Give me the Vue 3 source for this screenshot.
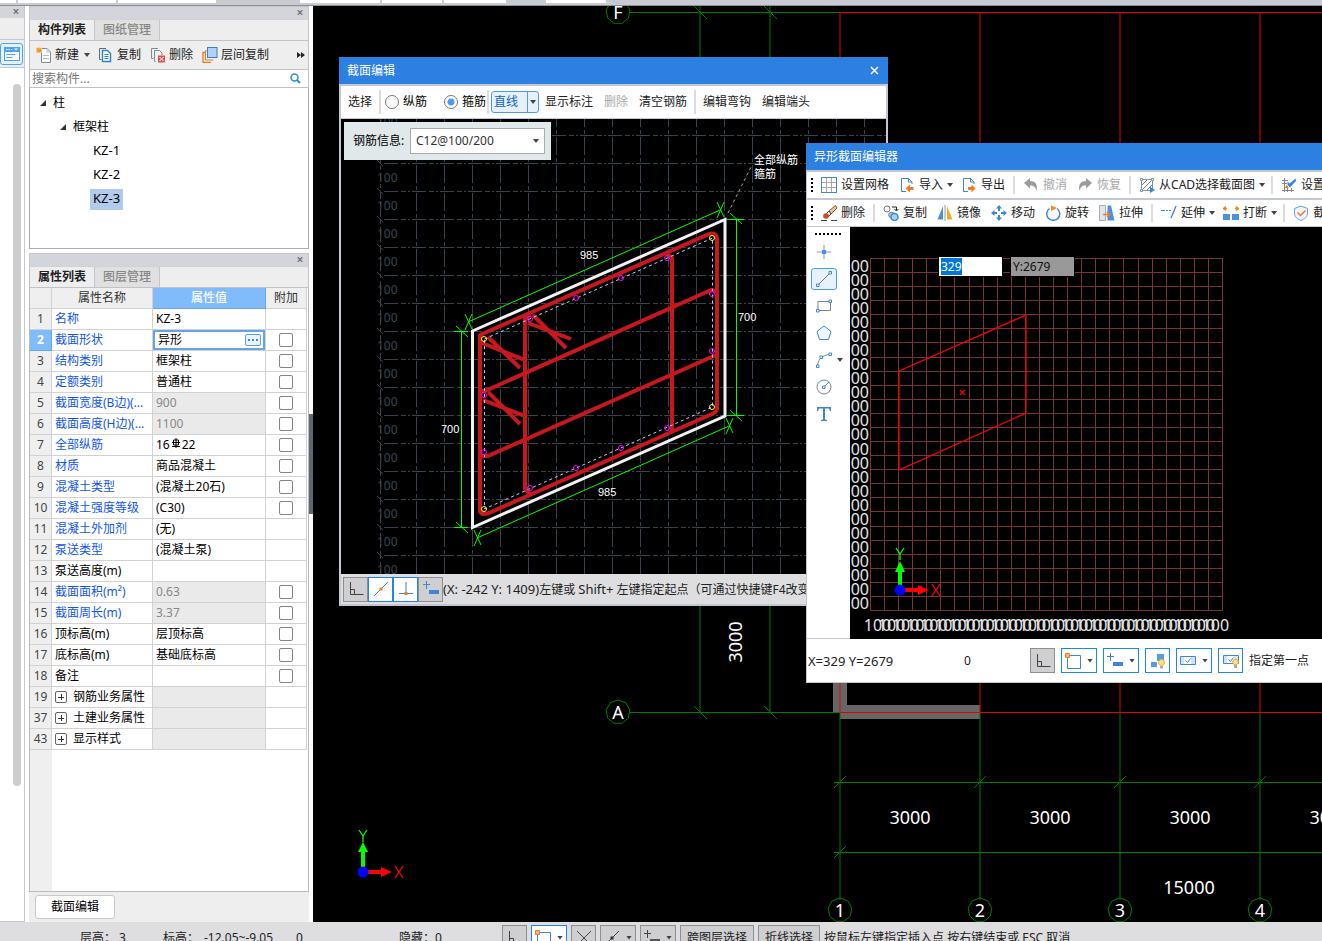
<script setup>
import { ref, onMounted } from "vue";

const xInput = ref(null);
const xValue = ref("329");
const search = ref("");
const shape = ref("异形");
const barType = ref("stirrup");
const rebarInfo = ref("C12@100/200");

onMounted(() => {
  xInput.value.focus();
  xInput.value.select();
});

const tabStrip = ["w16", "w99", "w99", "hole", "w80", "w59", "w62", "hole2", "w59"];

const properties = [
  { no: 1, name: "名称", value: "KZ-3", link: true },
  { no: 2, name: "截面形状", value: "异形", link: true, check: true, active: true },
  { no: 3, name: "结构类别", value: "框架柱", link: true, check: true },
  { no: 4, name: "定额类别", value: "普通柱", link: true, check: true },
  { no: 5, name: "截面宽度(B边)(...", value: "900", link: true, check: true, locked: true },
  { no: 6, name: "截面高度(H边)(...", value: "1100", link: true, check: true, locked: true },
  { no: 7, name: "全部纵筋", value: "16", rebar: "22", link: true, check: true },
  { no: 8, name: "材质", value: "商品混凝土", link: true, check: true },
  { no: 9, name: "混凝土类型", value: "(混凝土20石)", link: true, check: true },
  { no: 10, name: "混凝土强度等级", value: "(C30)", link: true, check: true },
  { no: 11, name: "混凝土外加剂", value: "(无)", link: true },
  { no: 12, name: "泵送类型", value: "(混凝土泵)", link: true },
  { no: 13, name: "泵送高度(m)", value: "" },
  { no: 14, name: "截面面积(m²)", value: "0.63", link: true, check: true, locked: true },
  { no: 15, name: "截面周长(m)", value: "3.37", link: true, check: true, locked: true },
  { no: 16, name: "顶标高(m)", value: "层顶标高", check: true },
  { no: 17, name: "底标高(m)", value: "基础底标高", check: true },
  { no: 18, name: "备注", value: "", check: true },
  { no: 19, name: "钢筋业务属性", value: "", group: true, locked: true },
  { no: 37, name: "土建业务属性", value: "", group: true, locked: true },
  { no: 43, name: "显示样式", value: "", group: true, locked: true },
];

const icons = {
  create:
    '<path d="M5.500 5.500V15.500H14.500V5L11 1.500H6" fill="#fff" stroke="#7b8c92"/><path d="M11 1.500V5H14.500M7 8.500h6M7 11.500h6" fill="none" stroke="#b9b9c4"/><path d="M0.500 1l5 4.500M5.500 1l-5 4.500M3 .5v5.500M.5 3.300h5.500" stroke="#f29a1f" stroke-width="1.200"/>',
  copy:
    '<path d="M3.500 12.500H1.500V1.500H8" fill="none" stroke="#5a6f80"/><path d="M4.500 3.500h5l3 3v8h-8z" fill="#fff" stroke="#2f7fd0" stroke-width="1.400"/><path d="M6.500 7.500h4M6.500 9.500h4M6.500 11.500h4" stroke="#2f7fd0"/>',
  remove:
    '<path d="M3.500 11.500H1.500V1.500H8M5.500 14.500h-1v-11h5l2.500 2.500v2" fill="none" stroke="#7b8c92"/><rect x="8" y="8.500" width="7" height="7" fill="#d9534f"/><path d="M9.500 10l4 4M13.500 10l-4 4" stroke="#fff"/>',
  layers:
    '<path d="M3 5.500H1V15.500H9" fill="none" stroke="#f07b1c" stroke-width="1.300"/><path d="M4.500 3.500H3.500V13H11.500" fill="none" stroke="#f07b1c"/><rect x="5.500" y=".5" width="9.500" height="10" fill="#b3d1ff" stroke="#3f7cc4"/>',
  grid:
    '<rect x=".5" y=".5" width="15" height="15" fill="#fff" stroke="#3f86d8"/><path d="M1 5.500h14M1 10.500h14M5.500 1v14M10.500 1v14" stroke="#a5a9ae"/><rect x=".5" y=".5" width="15" height="15" fill="none" stroke="#3f86d8"/>',
  load:
    '<path d="M7 14.500H2.500V1.500H9.500L13 5V7" fill="#fff" stroke="#3f86d8"/><path d="M9.500 1.500V5H13" fill="none" stroke="#3f86d8"/><path d="M6.500 11.500L11 7.500V10H14.500V13H11V15.500z" fill="#f37b21"/>',
  save:
    '<path d="M7 14.500H2.500V1.500H9.500L13 5V7" fill="#fff" stroke="#3f86d8"/><path d="M9.500 1.500V5H13" fill="none" stroke="#3f86d8"/><path d="M14.500 11.500L10.500 7.500V10H7V13H10.500V15.500z" fill="#f37b21"/>',
  undo: '<path d="M1 6L7 1V4C12 4 15 7 13.500 14C12.500 10 11 8.500 7 8.500V11.500z" fill="#9b9b9b"/>',
  redo: '<path d="M15 6L9 1V4C4 4 1 7 2.500 14C3.500 10 5 8.500 9 8.500V11.500z" fill="#9b9b9b"/>',
  hatch:
    '<rect x="2.500" y="2.500" width="11" height="11" fill="none" stroke="#84949a"/><path d="M3 8l5-5M3 13l10-10M8 13l5-5" stroke="#6b8088"/><path d="M1.500 1.500h2v2h-2zM12.500 1.500h2v2h-2zM1.500 12.500h2v2h-2z" fill="#fff" stroke="#84949a"/><path d="M11 9.500l5 3.500-5 3z" fill="#3f86d8"/>',
  setting:
    '<path d="M1 3.500h6M1 6.500h5M1 13.500h12M3.500 1v14M6.500 9v6M10.500 11v4" stroke="#85898e"/><path d="M14.500 1.500L8.500 6.500L6.500 4.500V8L9 10.500L15 4z" fill="#3f86d8"/><path d="M3.500 11.500l2-3.500 2.500 2.500z" fill="#f37b21"/>',
  brush:
    '<path d="M14.500 .5L8 6L10 9L16 3z" fill="#e8c79c" stroke="#7a5a38"/><path d="M8 6L5.500 8.500L7.500 11.500L10 9z" fill="#fff" stroke="#444"/><circle cx="5" cy="11" r="2.800" fill="#d24a18"/><path d="M0 15.500h6M10 15.500h6" stroke="#444"/>',
  copyShape:
    '<circle cx="4" cy="4" r="3" fill="#fff" stroke="#777"/><path d="M9 2h4.500v3.500M11.500 4l2 2 2-2" fill="none" stroke="#222"/><circle cx="8.500" cy="10" r="2.800" fill="#a9d0f8" stroke="#777"/><circle cx="11.500" cy="12" r="3.500" fill="#a9d0f8" stroke="#3f86d8" stroke-width="1.500"/>',
  mirror: '<path d="M6 1V14.500H.5z" fill="#4a8edb"/><path d="M10 1V14.500H15.500z" fill="#f5a81c"/><path d="M8 0v16" stroke="#999"/>',
  move:
    '<path d="M8 0l3 3.500H9V6H7V3.500H5zM8 16l3-3.500H9V10H7v2.500H5zM0 8l3.500-3V7H6v2H3.500v2zM16 8l-3.500-3V7H10v2h2.500v2z" fill="#3f86d8"/>',
  rotate:
    '<path d="M4.500 3.500A6.500 6.500 0 1 0 12 3.500" fill="none" stroke="#3f86d8" stroke-width="1.500"/><path d="M6 .5L12 3L6 6z" fill="#f28a1e"/>',
  stretch:
    '<path d="M.5 .5h6v15h-6z" fill="#e2e5ea" stroke="#a8acb4"/><path d="M8.500 .5h3.500L15.500 15.500h-7z" fill="#4a90e2"/><path d="M4 9.500h6M8 7l3 2.500L8 12" fill="none" stroke="#f37b21" stroke-width="1.500"/>',
  extend:
    '<path d="M0 5.500h4" stroke="#3f86d8"/><path d="M5 5.500h6" stroke="#3f86d8" stroke-dasharray="2 1"/><path d="M15 1L10 13" stroke="#3f86d8" stroke-width="1.300"/>',
  breakUp:
    '<path d="M0 9h7v6H0zM9 9h7v6H9z" fill="#4a90e2"/><path d="M0 3.500h4M12 3.500h4M3 1.500L.5 3.500 3 5.500M13 1.500l2.500 2-2.500 2" fill="none" stroke="#e08a14" stroke-width="1.300"/>',
  shield:
    '<path d="M8 1L14.500 3.500V8C14.500 12 11.500 14 8 15.500C4.500 14 1.500 12 1.500 8V3.500z" fill="#eef5fd" stroke="#6b9edb"/><path d="M4.500 7.500l3 3 5-5" fill="none" stroke="#f37b21" stroke-width="1.500"/>',
  point: '<path d="M8 1v4M8 11v4M1 8h4M11 8h4" stroke="#8b9298"/><circle cx="8" cy="8" r="2.500" fill="#4a90e2"/>',
  line: '<path d="M2 14L14 2" stroke="#6b757c"/><path d="M.5 13h2.500v2.500h-2.500zM13 .5h2.500v2.500h-2.500z" fill="#fff" stroke="#3f86d8"/>',
  rect: '<path d="M2 3.500h12.500v9H2z" fill="none" stroke="#7d868c"/><path d="M.5 11.500h2.500v2.500h-2.500zM13 2h2.500v2.500h-2.500z" fill="#fff" stroke="#3f86d8"/>',
  polygon: '<path d="M8 1L15 6.500L12.500 14.500H3.500L1 6.500z" fill="#f3f8fe" stroke="#3f86d8"/>',
  arc: '<path d="M1.500 14C2 7 6 3 14 2.500" fill="none" stroke="#7d868c"/><path d="M.5 13h2.500v2.500h-2.500zM4 4h2.500v2.500h-2.500zM13 1h2.500v2.500h-2.500z" fill="#fff" stroke="#3f86d8"/>',
  circle: '<circle cx="8" cy="8" r="7" fill="none" stroke="#7d868c"/><path d="M8 8l5-5" stroke="#3f86d8"/><path d="M6.500 7h2.500v2.500h-2.500z" fill="#fff" stroke="#3f86d8"/>',
  text: '<path d="M1 5V1h14v4h-1l-1-2.500H9V13.500l2 .5v1H5v-1l2-.5V2.500H3L2 5z" fill="#3f86d8"/>',
  corner: '<path d="M2.500 1V13.500H15.500M2.500 8.500H6.500V13.500" fill="none" stroke="#444"/>',
  midpoint: '<path d="M1 15L15 1" stroke="#3f86d8"/><path d="M6.500 6.500h3v3h-3z" fill="#f37b21"/>',
  foot: '<path d="M8 1V12M1 12.500H15" stroke="#3f86d8"/><path d="M6.500 11h3v3h-3z" fill="#f37b21"/>',
  offset: '<path d="M3.500 0v8M0 3.500h7" stroke="#3f86d8"/><path d="M6 9h10v4H6z" fill="#3f86d8"/>',
  offsetGray: '<path d="M3.500 0v8M0 3.500h7" stroke="#444"/><path d="M6 9h10v4H6z" fill="#555"/>',
  box: '<path d="M2.500 2.500h13v13h-13z" fill="#fff" stroke="#3f86d8"/><path d="M.5 .5h4v4h-4z" fill="#fbb27e" stroke="#f37b21"/>',
  cross: '<path d="M1 1L15 15M15 1L1 15" stroke="#444"/>',
  slash: '<path d="M1 15L15 1" stroke="#444"/><path d="M6.500 6.500h3v3h-3z" fill="#333"/>',
  bulb: '<path d="M7 1h7v7H7zM1 9h6v5H1z" fill="#5a9be6"/><circle cx="11.500" cy="9.500" r="3" fill="#ffe08a" stroke="#e5b030"/><path d="M10 13h3v2.500h-3z" fill="#aaa"/>',
  screen: '<path d="M.5 3.500h15v8H.5z" fill="#cfe3fa" stroke="#3f86d8"/><path d="M4 4h7v7H4z" fill="#fff"/><path d="M5.500 7.500l2 2 3-4" fill="none" stroke="#3f86d8"/>',
  screenBulb:
    '<path d="M.5 2.500h15v8H.5z" fill="#cfe3fa" stroke="#3f86d8"/><path d="M4 3h7v7H4z" fill="#fff"/><path d="M5.500 6.500l2 2 3-4" fill="none" stroke="#3f86d8"/><circle cx="12.500" cy="9" r="2.800" fill="#ffe08a" stroke="#e5b030"/><path d="M11 12h3v3h-3z" fill="#aaa"/>',
};

const listTools = [
  { icon: "create", label: "新建", caret: true },
  { icon: "copy", label: "复制" },
  { icon: "remove", label: "删除" },
  { icon: "layers", label: "层间复制" },
];

const fileTools = [
  { icon: "grid", label: "设置网格" },
  { icon: "load", label: "导入", caret: true },
  { icon: "save", label: "导出" },
  { sep: true },
  { icon: "undo", label: "撤消", disabled: true },
  { icon: "redo", label: "恢复", disabled: true },
  { sep: true },
  { icon: "hatch", label: "从CAD选择截面图", caret: true },
  { sep: true },
  { icon: "setting", label: "设置" },
];

const editTools = [
  { icon: "brush", label: "删除" },
  { sep: true },
  { icon: "copyShape", label: "复制" },
  { icon: "mirror", label: "镜像" },
  { icon: "move", label: "移动" },
  { icon: "rotate", label: "旋转" },
  { icon: "stretch", label: "拉伸" },
  { sep: true },
  { icon: "extend", label: "延伸", caret: true },
  { icon: "breakUp", label: "打断", caret: true },
  { sep: true },
  { icon: "shield", label: "截面" },
];

const drawTools = ["point", "line", "rect", "polygon", "arc", "circle", "text"];

const snapTools = [
  { icon: "corner", gray: true },
  { icon: "box", caret: true },
  { icon: "offset", caret: true },
  { icon: "bulb" },
  { icon: "screen", caret: true },
  { icon: "screenBulb" },
];

const bottomTools = [
  { icon: "corner", gray: true },
  { icon: "box", caret: true },
  { icon: "cross", gray: true },
  { icon: "slash", gray: true, caret: true },
  { icon: "offsetGray", gray: true, caret: true },
];

// nine sided axis bubble
function bubble(cx, cy) {
  const pts = [];
  for (let i = 0; i < 9; i++) {
    const a = (i * 2 * Math.PI) / 9 - Math.PI / 2;
    pts.push((cx + 12 * Math.cos(a)).toFixed(1) + "," + (cy + 12 * Math.sin(a)).toFixed(1));
  }
  return pts.join(" ");
}

const axes = [
  { x: 840, label: "1" },
  { x: 980, label: "2" },
  { x: 1120, label: "3" },
  { x: 1260, label: "4" },
];

const range = (n, start, step) => Array.from({ length: n }, (_, i) => start + i * step);
const gridX = range(17, 416, 28);
const gridY = range(16, 135, 28);
const cellX = range(26, 870.5, 14.08);
const cellY = range(26, 258.5, 14.08);

const cornerBars = [[484, 339], [712, 238], [712, 407], [484, 509]];
const sideBars = [
  [530, 319], [576, 298], [621, 278], [667, 258], [712, 294], [712, 351],
  [667, 428], [621, 448], [576, 468], [530, 488], [484, 395], [484, 452],
];
</script>

<template>
  <div class="app">
    <div class="tab-strip">
      <span v-for="(t, i) in tabStrip" :key="i" :class="t"></span>
    </div>

    <div class="main">
      <aside class="rail">
        <div class="panel-head"><button class="close" aria-label="关闭">×</button></div>
        <div class="rail-blank"></div>
        <div class="rail-tool">
          <button aria-label="列表">
            <svg width="16" height="16" viewBox="0 0 16 16">
              <rect x="0" y="1" width="16" height="14" fill="#4ba3f5" />
              <path d="M1 6h14v8h-14z" fill="#fff" />
              <path d="M2 3.500h1.500M4.500 3.500h1.500M7 3.500h1.500" stroke="#fff" />
              <path d="M10 2.500h4l-2 2z" fill="#fff" />
              <path d="M2.500 8.500h9M2.500 11.500h6" stroke="#4ba3f5" />
            </svg>
          </button>
        </div>
        <div class="rail-body"><div class="rail-bar"></div></div>
      </aside>

      <aside class="side">
        <section class="panel list-panel">
          <div class="panel-head"><button class="close" aria-label="关闭">×</button></div>
          <div class="tabs">
            <button class="tab on">构件列表</button>
            <button class="tab">图纸管理</button>
          </div>
          <div class="list-tools">
            <button v-for="t in listTools" :key="t.label" class="tool">
              <svg width="16" height="16" viewBox="0 0 16 16" v-html="icons[t.icon]"></svg>
              <span>{{ t.label }}</span>
              <i v-if="t.caret" class="caret"></i>
            </button>
            <button class="more" aria-label="更多">
              <svg width="8" height="6"><path d="M0 0L4 3L0 6zM4 0L8 3L4 6z" fill="#222" /></svg>
            </button>
          </div>
          <div class="search">
            <input v-model="search" aria-label="搜索构件" placeholder="搜索构件..." />
            <svg width="11" height="11" viewBox="0 0 11 11">
              <circle cx="4.500" cy="4.500" r="3.500" fill="none" stroke="#2d8fce" stroke-width="1.500" />
              <path d="M7 7l3 3" stroke="#2d8fce" stroke-width="2" />
            </svg>
          </div>
          <ul class="tree">
            <li class="lv1"><i class="fold"></i>柱</li>
            <li class="lv2"><i class="fold"></i>框架柱</li>
            <li class="lv3"><span>KZ-1</span></li>
            <li class="lv3"><span>KZ-2</span></li>
            <li class="lv3"><span class="picked">KZ-3</span></li>
          </ul>
        </section>

        <section class="panel prop-panel">
          <div class="panel-head"><button class="close" aria-label="关闭">×</button></div>
          <div class="tabs">
            <button class="tab on">属性列表</button>
            <button class="tab">图层管理</button>
          </div>
          <div class="table-wrap">
            <table>
              <colgroup>
                <col class="c-no" />
                <col class="c-name" />
                <col />
                <col class="c-add" />
              </colgroup>
              <thead>
                <tr>
                  <th></th>
                  <th>属性名称</th>
                  <th class="th-on">属性值</th>
                  <th>附加</th>
                </tr>
              </thead>
              <tbody>
                <tr v-for="p in properties" :key="p.no" :class="{ active: p.active }">
                  <td class="no">{{ p.no }}</td>
                  <td class="name" :class="{ link: p.link }">
                    <button v-if="p.group" class="plus" :aria-label="p.name"></button>{{ p.name }}
                  </td>
                  <td class="value" :class="{ locked: p.locked }">
                    <div v-if="p.active" class="editor">
                      <input v-model="shape" aria-label="截面形状" />
                      <button aria-label="选择形状"><i></i><i></i><i></i></button>
                    </div>
                    <template v-else>{{ p.value }}<svg v-if="p.rebar" class="rebar" width="10" height="12" viewBox="0 0 10 12">
                        <path d="M5 0v10M1 4.500h8M1 8.500h8M2.500 2h5v5h-5z" fill="none" stroke="#000" /></svg>{{ p.rebar }}</template>
                  </td>
                  <td class="add"><input v-if="p.check" type="checkbox" :aria-label="p.name" /></td>
                </tr>
              </tbody>
            </table>
          </div>
          <div class="panel-foot"><button>截面编辑</button></div>
        </section>
      </aside>

      <div class="splitter"><button aria-label="收起"></button></div>

      <main class="stage">
        <svg class="drawing">
          <g transform="translate(-313 -6)">
            <path d="M833 600V712H840V719H980V705H847V600z" fill="#666" />
            <g fill="none" stroke="#007d00">
              <path d="M630 12.500H840M630 712.500H840M700 0V712M770 0V712M834 782.500H1600M834 852.500H1600" />
              <path d="M694 6l13 13M764 6l13 13M694 706l13 13M764 706l13 13" />
              <path v-for="a in axes" :key="a.x" :d="`M${a.x} 712V900M${a.x - 6} 788l12 -12`" />
              <path d="M834 858l12 -12" />
              <polygon :points="bubble(618, 12)" />
              <polygon :points="bubble(618, 712)" />
              <polygon v-for="a in axes" :key="a.label" :points="bubble(a.x, 910)" />
            </g>
            <path d="M840 12.500H1600M840 712.500H1600M840 12V712M980 12V712M1120 12V712M1260 12V712" stroke="#e80000" fill="none" />
            <g class="cad-text">
              <text x="618" y="19">F</text>
              <text x="618" y="719">A</text>
              <text v-for="a in axes" :key="a.x" :x="a.x" y="917">{{ a.label }}</text>
              <text v-for="a in axes" :key="a.x" :x="a.x + 70" y="824">3000</text>
              <text x="1189" y="894">15000</text>
              <text transform="translate(742 642) rotate(-90)">3000</text>
            </g>
            <g transform="translate(363 872)">
              <path d="M-2 0V-20H-5L0 -30L5 -20H2V0z" fill="#0f0" />
              <path d="M0 -2H18V-5L29 0L18 5V2H0z" fill="#f00" />
              <circle r="5.500" fill="#00f" />
              <path d="M-4 -42L0 -36V-30M4 -42L0 -36" stroke="#0f0" stroke-width="1.300" fill="none" />
              <path d="M32 -6L40 6M40 -6L32 6" stroke="#f00" stroke-width="1.300" />
            </g>
          </g>
        </svg>

        <section class="window section-window">
          <header class="title">截面编辑<button class="win-close" aria-label="关闭">
              <svg width="9" height="9"><path d="M1 1l7 7M8 1l-7 7" stroke="#fff" stroke-width="1.500" /></svg></button></header>
          <div class="frame">
            <div class="sec-tools">
              <button>选择</button>
              <i class="sep"></i>
              <label><input v-model="barType" type="radio" name="bar" value="vertical" />纵筋</label>
              <label class="second"><input v-model="barType" type="radio" name="bar" value="stirrup" />箍筋</label>
              <i class="sep tight"></i>
              <div class="split-btn"><button>直线</button><button aria-label="更多线型"><i class="caret"></i></button></div>
              <button>显示标注</button>
              <button disabled>删除</button>
              <button>清空钢筋</button>
              <i class="sep"></i>
              <button>编辑弯钩</button>
              <button>编辑端头</button>
            </div>
            <div class="sec-canvas">
              <svg class="drawing">
                <g transform="translate(-341 -119)">
                  <g stroke="#39404e" fill="none" shape-rendering="crispEdges">
                    <path v-for="x in gridX" :key="'x' + x" :d="`M${x}.500 109V580`" stroke-dasharray="18 3 4 3" />
                    <path v-for="y in gridY" :key="'y' + y" :d="`M384 ${y}.500H890`" stroke-dasharray="14 3 5 2 2 2" />
                    <path d="M380.500 119V580" stroke-dasharray="8 3 4 3" />
                    <path v-for="y in gridY" :key="'t' + y" :d="`M377 ${y - 3}l6 6`" />
                  </g>
                  <g class="grid-text">
                    <text v-for="y in gridY" :key="y" x="377" :y="y - 9">100</text>
                    <text x="377" y="574">100</text>
                  </g>
                  <path d="M472.500 331L725 219.500V416L472.500 527.500z" fill="none" stroke="#f2f2f2" stroke-width="3" />
                  <g fill="none" stroke="#c8181e" stroke-width="4" stroke-linejoin="round">
                    <path d="M480 335L709 234Q717 232 717 240V408Q717 412 712 414L489 513Q480 516 480 510z" />
                    <path d="M525 316V489L530 494M525 318L530 314M667 254L672 258V431" />
                    <path d="M481 391H485L711 290L716 291M482 456H488L716 355" />
                    <path d="M488 337L520 368M482 343L525 360M488 392L520 424M483 400L525 416M533 315L566 348M528 323L571 339" />
                  </g>
                  <path d="M484.500 339L712.500 238V407L484.500 509z" fill="none" stroke="#b4d4ff" stroke-dasharray="3 3" />
                  <g fill="none" stroke="#ffff3c">
                    <circle v-for="(b, i) in cornerBars" :key="i" :cx="b[0]" :cy="b[1]" r="2.500" />
                  </g>
                  <g fill="none" stroke="#f0f">
                    <circle v-for="(b, i) in sideBars" :key="i" :cx="b[0]" :cy="b[1]" r="2.500" />
                  </g>
                  <g fill="none" stroke="#0f0">
                    <path d="M468 322L720 210M477 538L729 426M461.500 331V527M736.500 219V416" />
                    <path d="M454 331.500h14M454 527.500h14M727 219.500h17M727 415.500h17" />
                    <path d="M456 326l12 11M456 522l12 11M730 213l12 11M730 410l12 11" />
                    <path d="M465 314l7 15M472 314l-7 16M717 202l7 15M724 202l-7 16M474 530l7 15M481 530l-7 16M726 418l7 15M733 418l-7 16" />
                  </g>
                  <path d="M728 213L752 165" stroke="#aaa" stroke-dasharray="3 3" />
                  <g class="dim-text">
                    <text x="580" y="259">985</text>
                    <text x="598" y="496">985</text>
                    <text x="441" y="433">700</text>
                    <text x="738" y="321">700</text>
                    <text x="754" y="164">全部纵筋</text>
                    <text x="754" y="178">箍筋</text>
                  </g>
                </g>
              </svg>
              <div class="rebar-info">
                <label for="rebar">钢筋信息:</label>
                <div class="select-box">
                  <select id="rebar" v-model="rebarInfo"><option>C12@100/200</option></select>
                  <i class="caret"></i>
                </div>
              </div>
            </div>
            <footer class="sec-status">
              <button class="gray" aria-label="正交"><svg width="16" height="16" viewBox="0 0 16 16" v-html="icons.corner"></svg></button>
              <button aria-label="中点"><svg width="16" height="16" viewBox="0 0 16 16" v-html="icons.midpoint"></svg></button>
              <button aria-label="垂足"><svg width="16" height="16" viewBox="0 0 16 16" v-html="icons.foot"></svg></button>
              <button class="gray" aria-label="偏移"><svg width="16" height="16" viewBox="0 0 16 16" v-html="icons.offset"></svg></button>
              <p><span class="latin">(X: -242 Y: 1409)</span>左键或 <span class="latin">Shift+</span> 左键指定起点（可通过快捷键F4改变</p>
            </footer>
          </div>
        </section>

        <section class="window shape-window">
          <header class="title">异形截面编辑器</header>
          <div class="bar" v-for="(tools, n) in [fileTools, editTools]" :key="n">
            <i class="grip"></i>
            <template v-for="(t, i) in tools" :key="i">
              <i v-if="t.sep" class="sep"></i>
              <button v-else class="tool" :disabled="t.disabled">
                <svg width="16" height="16" viewBox="0 0 16 16" v-html="icons[t.icon]"></svg>
                <span>{{ t.label }}</span>
                <i v-if="t.caret" class="caret"></i>
              </button>
            </template>
          </div>
          <div class="shape-body">
            <div class="draw-tools">
              <i class="grip-h"></i>
              <div v-for="d in drawTools" :key="d" class="draw-row">
                <button :class="{ on: d === 'line' }" :aria-label="d">
                  <svg width="16" height="16" viewBox="0 0 16 16" v-html="icons[d]"></svg>
                </button>
                <i v-if="d === 'arc'" class="caret"></i>
              </div>
            </div>
            <div class="shape-canvas">
              <svg class="drawing">
                <g transform="translate(-850 -227)">
                  <g stroke="#7a3237" fill="none" shape-rendering="crispEdges">
                    <path v-for="x in cellX" :key="'x' + x" :d="`M${x} 258V610`" />
                    <path v-for="y in cellY" :key="'y' + y" :d="`M870 ${y}H1223`" />
                  </g>
                  <g class="cell-text">
                    <text v-for="y in cellY.slice(0, 25)" :key="y" x="869" :y="y + 13" text-anchor="end">100</text>
                    <text v-for="x in cellX.slice(0, 25)" :key="x" :x="x + 7" y="631" text-anchor="middle">100</text>
                  </g>
                  <path d="M899 371L1026 315V413L899 470zM960 390l5 5M965 390l-5 5" fill="none" stroke="#f00" stroke-width="1.200" />
                  <g transform="translate(900 590)">
                    <path d="M-2 0V-18H-5L0 -29L5 -18H2V0z" fill="#0f0" />
                    <path d="M0 -2H18V-5L29 0L18 5V2H0z" fill="#f00" />
                    <circle r="5.500" fill="#00f" />
                    <path d="M-4 -42L0 -36V-30M4 -42L0 -36" stroke="#0f0" stroke-width="1.300" fill="none" />
                    <path d="M32 -6L40 6M40 -6L32 6" stroke="#f00" stroke-width="1.300" />
                  </g>
                </g>
              </svg>
              <div class="coord-inputs">
                <input ref="xInput" v-model="xValue" aria-label="X" />
                <input class="y-input" value="Y:2679" aria-label="Y" readonly />
              </div>
            </div>
          </div>
          <footer class="shape-status">
            <span class="latin coords">X=329 Y=2679</span>
            <span class="zero">0</span>
            <button v-for="s in snapTools" :key="s.icon" :class="{ gray: s.gray, wide: s.caret }" :aria-label="s.icon">
              <svg width="16" height="16" viewBox="0 0 16 16" v-html="icons[s.icon]"></svg>
              <i v-if="s.caret" class="caret"></i>
            </button>
            <span>指定第一点</span>
          </footer>
        </section>
      </main>
    </div>

    <footer class="status">
      <span class="s-floor">层高：&nbsp;3</span>
      <span class="s-level">标高：</span>
      <span class="s-range">-12.05~-9.05</span>
      <span class="s-zero">0</span>
      <span class="s-hidden">隐藏：0</span>
      <button v-for="b in bottomTools" :key="b.icon" :class="{ gray: b.gray, wide: b.caret }" :aria-label="b.icon">
        <svg width="16" height="16" viewBox="0 0 16 16" v-html="icons[b.icon]"></svg>
        <i v-if="b.caret" class="caret"></i>
      </button>
      <button class="gray label">跨图层选择</button>
      <button class="gray label">折线选择</button>
      <span>按鼠标左键指定插入点 按右键结束或 ESC 取消</span>
    </footer>
  </div>
</template>

<style>
body {
  background: #fff;
  overflow: hidden;
}
</style>

<style scoped>
.app {
  height: 100vh;
  display: flex;
  flex-direction: column;
  overflow: hidden;
  font-family: "Noto Sans", "Noto Sans CJK SC", sans-serif;
  font-size: 12px;
  line-height: 16px;
  color: #222;
}
.app * {
  box-sizing: border-box;
}
button,
input,
select {
  font: inherit;
  color: inherit;
  margin: 0;
  padding: 0;
  border: 0;
  background: none;
  white-space: nowrap;
}
svg {
  display: block;
  flex: none;
}
.latin {
  font-size: 13px;
}
.caret {
  flex: none;
  width: 6px;
  height: 4px;
  background: #444;
  clip-path: polygon(0 0, 100% 0, 50% 100%);
}
.drawing {
  width: 100%;
  height: 100%;
}

/* top strip */
.tab-strip {
  flex: 0 0 6px;
  display: flex;
  gap: 2px;
  background: #c8cbd1;
  border-bottom: 1px solid #8d9096;
}
.tab-strip span {
  height: 3px;
  background: #fff;
}
.tab-strip .w16 { width: 16px; }
.tab-strip .w99 { width: 98px; }
.tab-strip .w80 { width: 80px; }
.tab-strip .w59 { width: 60px; }
.tab-strip .w62 { width: 62px; }
.tab-strip .hole { width: 80px; background: none; }
.tab-strip .hole2 { width: 36px; background: none; }

.main {
  flex: 1;
  min-height: 0;
  display: flex;
}

/* left rail */
.rail {
  flex: 0 0 25px;
  display: flex;
  flex-direction: column;
  border-right: 1px solid #c6c8cc;
  border-bottom: 1px solid #c6c8cc;
  margin-right: 4px;
}
.panel-head {
  flex: 0 0 12px;
  display: flex;
  justify-content: flex-end;
  align-items: center;
  padding-right: 4px;
  background: #d3d5db;
}
.close {
  width: 8px;
  line-height: 12px;
  font-weight: bold;
  color: #777;
}
.rail-blank {
  height: 22px;
  background: #eee;
  border-bottom: 1px solid #c6c8cc;
}
.rail-tool {
  height: 28px;
  padding-top: 3px;
  background: #eee;
  border-bottom: 1px solid #c6c8cc;
}
.rail-tool button {
  display: flex;
  align-items: center;
  justify-content: center;
  width: 23px;
  height: 22px;
  border: 1px solid #4ba3f5;
  border-radius: 3px;
  background: #e6f2fd;
}
.rail-body {
  flex: 1;
  padding: 16px 3px 135px 13px;
}
.rail-bar {
  height: 100%;
  border-radius: 4px;
  background: #cdcdcd;
}

/* side panels */
.side {
  flex: 0 0 280px;
  display: flex;
  flex-direction: column;
  gap: 4px;
}
.panel {
  display: flex;
  flex-direction: column;
}
.panel > .panel-head {
  border: 1px solid #c4c6cb;
  border-bottom: 0;
}
.tabs {
  display: flex;
  height: 22px;
  background: #eee;
  border: 1px solid #c0c2c8;
  border-top-color: #d0d2d6;
}
.tab {
  width: 65px;
  font-weight: bold;
  color: #222;
  border-right: 1px solid #c4c6cb;
}
.tab:not(.on) {
  background: #e0e0e0;
  color: #888;
  font-weight: 500;
}
.list-tools {
  display: flex;
  align-items: center;
  gap: 9px;
  height: 28px;
  padding-left: 6px;
  background: #eee;
  border-left: 1px solid #c0c2c8;
  border-right: 1px solid #c0c2c8;
}
.list-tools .tool {
  display: flex;
  align-items: center;
  gap: 3px;
}
.list-tools .tool .caret {
  margin-left: 2px;
}
.list-tools .tool:first-child {
  margin-right: -1px;
}
.more {
  margin-left: auto;
  padding-right: 3px;
}
.search {
  display: flex;
  align-items: center;
  height: 19px;
  padding: 0 7px 0 2px;
  border: 1px solid #c0c2c8;
}
.search input {
  flex: 1;
  outline: 0;
}
.search input::placeholder {
  color: #777;
}
.tree {
  height: 161px;
  margin: 0;
  padding: 3px 0 0;
  list-style: none;
  border: 1px solid #a9abae;
  border-top: 0;
  color: #000;
}
.tree li {
  display: flex;
  align-items: center;
  height: 24px;
}
.tree .lv1 { padding-left: 10px; }
.tree .lv2 { padding-left: 30px; }
.tree .lv3 { padding-left: 60px; font-size: 13px; }
.tree .lv3 span {
  padding: 2px 3px 4px;
  line-height: 15px;
}
.tree .picked {
  background: #b0cbec;
}
.fold {
  width: 6px;
  height: 6px;
  margin-right: 7px;
  background: #333;
  clip-path: polygon(100% 0, 100% 100%, 0 100%);
}

.prop-panel {
  flex: 1;
  min-height: 0;
}
.table-wrap {
  flex: 1;
  min-height: 0;
  overflow: hidden;
  padding-right: 1px;
  border: 1px solid #b9bbbf;
  border-top: 0;
  background: linear-gradient(to right, #efefef 22px, #fff 22px);
}
table {
  width: 100%;
  table-layout: fixed;
  border-collapse: separate;
  border-spacing: 0;
}
.c-no { width: 22px; }
.c-name { width: 101px; }
.c-add { width: 41px; }
th,
td {
  height: 21px;
  padding: 0;
  line-height: 16px;
  border-right: 1px solid #d2d2d2;
  border-bottom: 1px solid #d2d2d2;
  white-space: nowrap;
  overflow: hidden;
}
th {
  background: #efefef;
  font-weight: normal;
  color: #333;
}
th.th-on {
  background: #80bbfc;
  border-color: #66a6ec;
  color: #fff;
  font-weight: 500;
}
td {
  background: #fff;
}
.no {
  background: #efefef;
  text-align: center;
  color: #444;
}
.active .no {
  background: #80bbfc;
  border-color: #66a6ec;
  color: #fff;
  font-weight: bold;
}
.name {
  padding-left: 3px;
  color: #000;
}
.name.link {
  color: #1455f0;
}
.value {
  padding-left: 3px;
  color: #000;
}
.active .value {
  padding: 0;
}
.value.locked {
  background: #eaeaea;
  color: #888;
}
.editor {
  display: flex;
  align-items: center;
  height: 20px;
  padding: 0 2px 0 3px;
  border: 2px solid #62a4e8;
}
.editor input {
  flex: 1;
  min-width: 0;
}
.editor button {
  display: flex;
  align-items: center;
  justify-content: center;
  gap: 2px;
  width: 16px;
  height: 12px;
  border: 1px solid #5aa0e6;
  border-radius: 2px;
  background: #eaf4fe;
}
.editor button i {
  width: 2px;
  height: 2px;
  background: #3f86d8;
}
.rebar {
  display: inline-block;
  vertical-align: -1px;
  margin: 0 1px;
}
.add {
  text-align: center;
}
.add input {
  appearance: none;
  display: block;
  width: 14px;
  height: 14px;
  margin: 0 auto;
  border: 1px solid #858585;
  border-radius: 2px;
  background: #fff;
}
.plus {
  width: 12px;
  height: 12px;
  margin-right: 6px;
  vertical-align: -1px;
  border: 1px solid #666;
  border-radius: 2px;
  background:
    linear-gradient(#333, #333) center / 6px 1px no-repeat,
    linear-gradient(#333, #333) center / 1px 6px no-repeat,
    #fff;
}
.panel-foot {
  flex: 0 0 30px;
  padding: 3px 6px;
  background: #eee;
}
.panel-foot button {
  width: 80px;
  height: 24px;
  border: 1px solid #c8c8c8;
  border-radius: 3px;
  background: #fff;
  color: #000;
}
.splitter {
  flex: 0 0 4px;
  display: flex;
  align-items: center;
}
.splitter button {
  width: 4px;
  height: 100px;
  background: #5c6773;
}

/* drawing area */
.stage {
  flex: 1;
  min-width: 0;
  position: relative;
  overflow: hidden;
  background: #000;
}
.cad-text {
  font-size: 18px;
  fill: #fff;
  text-anchor: middle;
}
.window {
  position: absolute;
  display: flex;
  flex-direction: column;
}
.title {
  flex: 0 0 27px;
  display: flex;
  align-items: center;
  justify-content: space-between;
  padding: 0 9px 0 8px;
  background: #2c80e2;
  color: #fff;
}
.sep {
  flex: none;
  width: 2px;
  height: 24px;
  background: #dcdcdc;
}
.section-window {
  left: 26px;
  top: 51px;
  width: 549px;
  height: 549px;
}
.frame {
  flex: 1;
  min-height: 0;
  display: flex;
  flex-direction: column;
  border: 2px solid #c3c7d1;
}
.sec-tools {
  flex: 0 0 33px;
  display: flex;
  align-items: center;
  gap: 1px;
  padding-left: 2px;
  background: #fff;
  border-bottom: 1px solid #c3c7d1;
}
.sec-tools > button {
  height: 22px;
  padding: 0 5px;
}
.sec-tools > button:disabled {
  color: #aaa;
}
.sec-tools .sep {
  margin: 0 1px;
}
.sec-tools .sep.tight {
  margin: 0 1px 0 0;
}
.sec-tools label {
  display: flex;
  align-items: center;
  gap: 4px;
  padding-left: 2px;
  color: #000;
}
.sec-tools label.second {
  margin-left: 14px;
}
.sec-tools input {
  appearance: none;
  width: 14px;
  height: 14px;
  border: 1px solid #777;
  border-radius: 50%;
}
.sec-tools input:checked {
  background: radial-gradient(circle, #4a9bf5 3px, #fff 4px);
}
.split-btn {
  display: flex;
  width: 48px;
  height: 22px;
  border: 1px solid #4c9cf0;
  border-radius: 3px;
  background: #e6f1fd;
  color: #0b62c4;
}
.split-btn button {
  padding: 0 2px;
}
.split-btn button + button {
  display: flex;
  align-items: center;
  margin-left: auto;
  border-left: 1px solid #4c9cf0;
}
.sec-canvas {
  flex: 1;
  min-height: 0;
  position: relative;
  overflow: hidden;
  background: #000;
}
.grid-text {
  font-size: 12px;
  fill: #3d4452;
}
.dim-text {
  font-family: "Liberation Sans", "Noto Sans CJK SC", sans-serif;
  font-size: 11px;
  fill: #fff;
}
.rebar-info {
  position: absolute;
  left: 3px;
  top: 3px;
  display: flex;
  align-items: center;
  justify-content: space-between;
  width: 207px;
  height: 38px;
  padding: 0 6px 0 9px;
  background: #e0e8ea;
  color: #000;
}
.select-box {
  display: flex;
  align-items: center;
  width: 135px;
  height: 26px;
  padding: 0 5px;
  border: 1px solid #aaa;
  background: #fff;
}
.select-box select {
  appearance: none;
  flex: 1;
  color: #333;
}
.sec-status {
  flex: 0 0 30px;
  display: flex;
  align-items: center;
  padding-left: 2px;
  background: #dedee0;
  overflow: hidden;
}
.sec-status button,
.shape-status button,
.status button {
  flex: none;
  display: flex;
  align-items: center;
  justify-content: center;
  width: 25px;
  height: 25px;
  border: 1px solid #1e86f0;
  background: #fff;
}
.sec-status .gray,
.shape-status .gray,
.status .gray {
  background: #cfcfd1;
  border-color: #8f8f8f;
}
.sec-status p {
  margin: 0;
  white-space: nowrap;
}

/* polygon editor */
.shape-window {
  left: 493px;
  right: 0;
  top: 137px;
  height: 540px;
  background: #fff;
  border-bottom: 1px solid #c3c7d1;
  overflow: hidden;
}
.bar,
.shape-body,
.shape-status {
  border-left: 1px solid #c3c7d1;
}
.bar {
  flex: 0 0 28px;
  display: flex;
  align-items: center;
  gap: 2px;
  padding-left: 4px;
  border-top: 2px solid #c3c7d1;
  overflow: hidden;
}
.bar .sep {
  height: 18px;
  margin: 0 2px;
}
.grip {
  flex: none;
  width: 2px;
  height: 14px;
  margin-right: 2px;
  background: repeating-linear-gradient(#000 0 2px, transparent 2px 4px);
}
.bar .tool {
  flex: none;
  display: flex;
  align-items: center;
  gap: 4px;
  height: 22px;
  padding: 0 4px;
}
.bar .tool:has(.caret) {
  padding-right: 2px;
}
.bar .tool:disabled {
  color: #a8a8a8;
}
.shape-body {
  flex: 1;
  min-height: 0;
  display: flex;
  border-top: 1px solid #c3c7d1;
}
.draw-tools {
  flex: 0 0 43px;
  display: flex;
  flex-direction: column;
  gap: 5px;
  padding: 6px 0 0 4px;
  border-bottom: 1px solid #c3c7d1;
}
.grip-h {
  width: 26px;
  height: 2px;
  margin: 0 0 1px 4px;
  background: repeating-linear-gradient(to right, #000 0 2px, transparent 2px 4px);
}
.draw-row {
  display: flex;
  align-items: center;
}
.draw-row button {
  display: flex;
  align-items: center;
  justify-content: center;
  width: 26px;
  height: 22px;
  border-radius: 3px;
}
.draw-row .on {
  border: 1px solid #4c9cf0;
  background: #e8f2fd;
}
.shape-canvas {
  flex: 1;
  min-width: 0;
  position: relative;
  background: #000;
}
.cell-text {
  font-size: 16px;
  fill: #e6e6e6;
}
.coord-inputs {
  position: absolute;
  left: 89px;
  top: 30px;
  display: flex;
  gap: 9px;
}
.coord-inputs input {
  width: 63px;
  height: 19px;
  padding: 0 2px;
  background: #fff;
  outline: 1px solid #000;
}
.coord-inputs input::selection {
  background: #0078d7;
  color: #fff;
}
.coord-inputs .y-input {
  background: #999;
  color: #111;
}
.shape-status {
  flex: 0 0 43px;
  display: flex;
  align-items: center;
  gap: 6px;
  padding-left: 1px;
  white-space: nowrap;
}
.coords { width: 150px; }
.zero { width: 60px; }
.shape-status .wide,
.status .wide {
  width: 36px;
  gap: 6px;
}

/* bottom status, cut by the window edge */
.status {
  flex: 0 0 19px;
  display: flex;
  align-items: flex-start;
  gap: 4px;
  padding-left: 80px;
  overflow: hidden;
  background: #dedee0;
  white-space: nowrap;
}
.status span {
  flex: none;
  padding-top: 8px;
}
.status button {
  margin-top: 3px;
}
.status .label {
  width: auto;
  padding: 0 6px;
}
.s-floor { width: 79px; }
.s-level { width: 37px; }
.s-range { width: 88px; }
.s-zero { width: 99px; }
.s-hidden { width: 99px; }
</style>
